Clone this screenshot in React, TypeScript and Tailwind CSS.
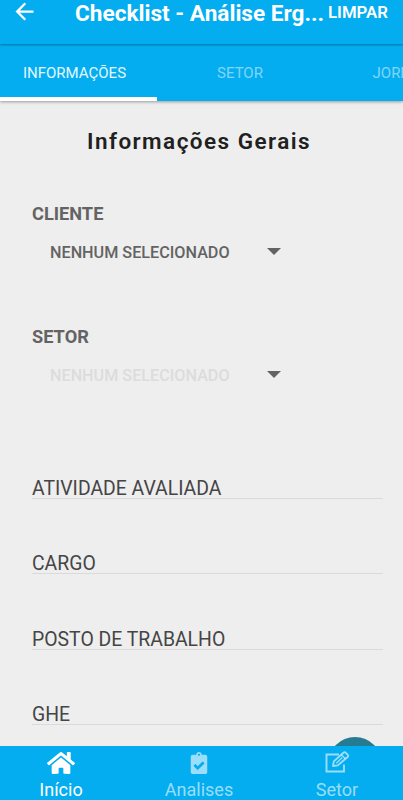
import { FaClipboardCheck, FaHome } from 'react-icons/fa'
import { MdArrowBack } from 'react-icons/md'

const fields = ['ATIVIDADE AVALIADA', 'CARGO', 'POSTO DE TRABALHO', 'GHE']

function EditIcon() {
  return (
    <svg className="mt-[5px] h-[22px] w-[25px] shrink-0" viewBox="0 0 25 22" fill="none" stroke="currentColor" strokeWidth="1.9">
      <path d="M14 3.5H1.5v17h17.5v-7" />
      <path d="M8 15l.8-4.6L18.4 1.7q1.2-1 2.4.1l1.8 1.8q1.1 1.2 0 2.4l-9.8 8.4z" strokeLinejoin="round" />
      <path d="M16.3 3.8l4.2 4M11.3 12.2l6-5.6" strokeWidth="1.3" />
    </svg>
  )
}

function Picker({ label, disabled }: { label: string; disabled?: boolean }) {
  return (
    <div className="h-[123px]">
      <p className="text-[18.2px] leading-6 font-bold text-[#636363]">{label}</p>
      <button className="mt-[15px] flex h-6 w-[249px] items-center justify-between pl-[18px]" disabled={disabled}>
        <span className={disabled ? 'text-[16.2px] font-medium text-[#dcdcdc]' : 'text-[16.2px] font-medium text-[#636363]'}>
          NENHUM SELECIONADO
        </span>
        <svg className="mb-[3px] h-[7px] w-[14px]" viewBox="0 0 14 7" fill="#636363">
          <path d="M0 0h14L7 7z" />
        </svg>
      </button>
    </div>
  )
}

export default function App() {
  return (
    <div className="flex h-[800px] w-[403px] flex-col overflow-hidden bg-[#eeeeee] font-['Roboto',sans-serif]">
      <header className="relative z-20 flex h-[44px] shrink-0 bg-[#03adf0] text-white shadow-[0_1px_2px_rgba(0,0,0,0.35)]">
        <MdArrowBack className="ml-[11px] mt-[-2px] size-[27px] shrink-0" />
        <h1 className="ml-[37px] w-[253px] shrink-0 text-[22.6px] leading-[27px] font-bold whitespace-nowrap">Checklist - Análise Erg...</h1>
        <button className="h-[26px] text-[16.8px] font-semibold">LIMPAR</button>
      </header>

      <nav className="z-10 flex h-[57px] shrink-0 overflow-hidden bg-[#03adf0] text-[15px] text-white/50 shadow-[0_1px_3px_rgba(0,0,0,0.35)]">
        <div className="ml-[-8px] flex w-[165px] shrink-0 items-center justify-center border-b-[4px] border-white pt-[6px] text-white/90">INFORMAÇÕES</div>
        <div className="flex w-[166px] shrink-0 items-center justify-center pt-[2px]">SETOR</div>
        <div className="flex w-[167px] shrink-0 items-center justify-center pt-[2px]">JORNADA</div>
      </nav>

      <main className="relative min-h-0 flex-1 overflow-hidden px-8">
        <h2 className="mt-[25px] pr-[5px] text-center text-[22.5px] leading-[30px] font-semibold tracking-[1.45px] text-[#202020]">Informações Gerais</h2>
        <div className="mt-[46px]">
          <Picker label="CLIENTE" />
          <Picker label="SETOR" disabled />
        </div>
        <div className="mt-[-25px]">
          {fields.map((field) => (
            <div key={field} className="flex h-[75.6px] w-[351px] items-end border-b border-[#dadada] text-[19.4px] leading-[18px] text-[#454545]">
              {field}
            </div>
          ))}
        </div>
        <button className="absolute top-[636px] left-[328px] size-[54px] rounded-full bg-[#257c92]" aria-label="Adicionar" />
      </main>

      <footer className="flex h-[54px] shrink-0 bg-[#03adf0] text-[18px] leading-[20px] text-white/60">
        <div className="flex w-[122px] flex-col items-center text-white">
          <FaHome className="mt-[3px] size-[28px] shrink-0" />
          <span className="mt-[3px]">Início</span>
        </div>
        <div className="flex w-[154px] flex-col items-center">
          <FaClipboardCheck className="mt-[6px] size-[22px] shrink-0" />
          <span className="mt-[6px]">Analises</span>
        </div>
        <div className="flex w-[122px] flex-col items-center">
          <EditIcon />
          <span className="mt-[7px]">Setor</span>
        </div>
      </footer>
    </div>
  )
}
